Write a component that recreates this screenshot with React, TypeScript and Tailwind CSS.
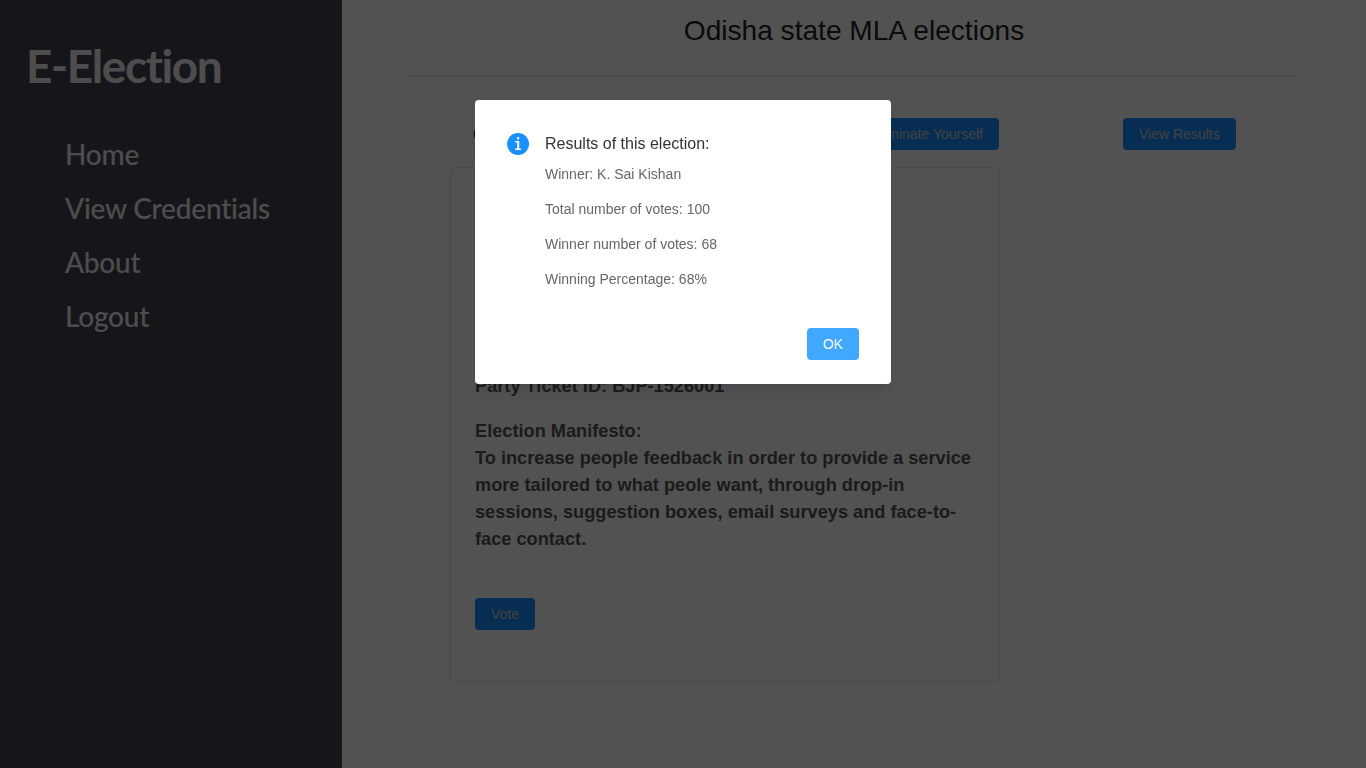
const NAV_ITEMS = ['Home', 'View Credentials', 'About', 'Logout'];

const RESULT_LINES = [
  'Winner: K. Sai Kishan',
  'Total number of votes: 100',
  'Winner number of votes: 68',
  'Winning Percentage: 68%',
];

const Sidebar = () => (
  <aside className="w-[342px] shrink-0 bg-[#454552] text-[#eeeeee] [font-variant-ligatures:none]">
    <div className="pl-[26px] pt-[37px] font-['Lato',sans-serif] text-[46px] leading-[58px] font-bold tracking-[-1.4px]">
      E-Election
    </div>
    <nav className="mt-[32px] flex flex-col pl-[65px] font-['Lato',sans-serif] text-[28px] leading-[54px] font-medium tracking-[-0.2px]">
      {NAV_ITEMS.map((item) => (
        <a key={item}>{item}</a>
      ))}
    </nav>
  </aside>
);

const Button = ({ label, className }: { label: string; className: string }) => (
  <button
    type="button"
    className={`h-8 rounded bg-[#1890ff] px-4 text-sm font-normal text-[#cccccc] ${className}`}
  >
    {label}
  </button>
);

const Main = () => (
  <main className="flex flex-1 flex-col font-['Liberation_Sans',sans-serif] text-[#222222]">
    <h1 className="self-center pt-[9px] text-[28.1px] leading-[43px] font-normal">
      Odisha state MLA elections
    </h1>
    <hr className="mt-[23px] ml-[66px] w-[888px] border-[#dddddd]" />
    <div className="mt-[42px] ml-[66px] flex w-[888px]">
      <div className="ml-[42px] flex w-[550px] flex-col">
        <div className="flex h-8 items-center justify-between pr-px pl-[23px]">
          <span className="text-xl font-bold">Candidates</span>
          <Button label="Nominate Yourself" className="" />
        </div>
        <div className="mt-[17px] h-[515px] rounded border border-[#e8e8e8] px-[24px] pt-[205px] text-[18.2px] leading-[27px] font-bold text-[#555555]">
          <p>Party Ticket ID: BJP-1526001</p>
          <p className="mt-[18px]">Election Manifesto:</p>
          <p>
            To increase people feedback in order to provide a service more tailored to what peole
            want, through drop-in sessions, suggestion boxes, email surveys and face-to-face
            contact.
          </p>
          <Button label="Vote" className="mt-[45px]" />
        </div>
      </div>
      <Button label="View Results" className="ml-[123px]" />
    </div>
  </main>
);

const ResultsModal = () => (
  <div className="fixed inset-0 flex justify-center bg-black/[0.68] pt-[100px]">
    <div className="h-[284px] w-[416px] rounded bg-white px-8 pt-8 pb-6 font-['Liberation_Sans',sans-serif] shadow-lg">
      <div className="flex gap-4">
        <svg viewBox="0 0 22 22" className="mt-px h-[22px] w-[22px] shrink-0">
          <circle cx="11" cy="11" r="11" fill="#1890ff" />
          <rect x="10" y="4.2" width="2.2" height="2.2" fill="#fff" />
          <path d="M8.2 8h4v7.4H14V17H8v-1.6h2.2V9.6H8.2z" fill="#fff" />
        </svg>
        <div>
          <h2 className="pt-px text-base leading-[22px] font-normal text-[#333333]">
            Results of this election:
          </h2>
          <div className="mt-[9px] text-sm leading-[21px] text-[#666666]">
            {RESULT_LINES.map((line) => (
              <p key={line} className="mb-[14px]">
                {line}
              </p>
            ))}
          </div>
        </div>
      </div>
      <div className="mt-6 flex justify-end">
        <button type="button" className="h-8 w-[52px] rounded bg-[#40a9ff] text-sm text-white">
          OK
        </button>
      </div>
    </div>
  </div>
);

export default function App() {
  return (
    <div className="flex h-[768px] overflow-hidden bg-white">
      <Sidebar />
      <Main />
      <ResultsModal />
    </div>
  );
}
